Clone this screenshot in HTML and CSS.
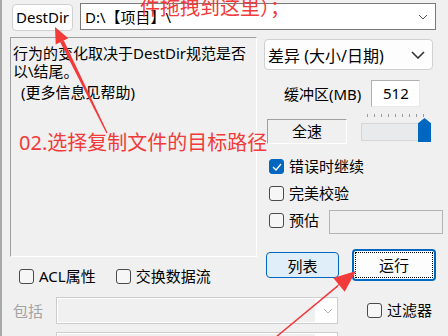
FILE: index.html
```html
<!DOCTYPE html>
<html lang="zh-CN">
<head>
    <meta charset="UTF-8">
    <title>FastCopy</title>
    <link rel="stylesheet" href="styles.css">
</head>
<body>

    <div class="top">
        <button class="dest-btn">DestDir</button>
        <div class="path-box">
            <span>D:\【项目】\</span>
            <svg width="10" height="6" viewBox="0 0 10 6"><path d="M1 1 L5 5 L9 1" fill="none" stroke="#555" stroke-width="1"/></svg>
        </div>
    </div>

    <div class="main">
        <div class="left">
            <div class="desc">
                <p>行为的变化取决于DestDir规范是否<br>以\结尾。</p>
                <p class="more">(更多信息见帮助)</p>
            </div>
            <div class="opts">
                <label class="check acl"><span class="box"></span>ACL属性</label>
                <label class="check"><span class="box"></span>交换数据流</label>
            </div>
        </div>

        <div class="right">
            <div class="mode">
                <span>差异 (大小/日期)</span>
                <svg width="14" height="8" viewBox="0 0 14 8"><path d="M1 1 L7 7 L13 1" fill="none" stroke="#333" stroke-width="1.6"/></svg>
            </div>
            <div class="buffer">
                <span>缓冲区(MB)</span>
                <div class="num">512</div>
            </div>
            <div class="speed">
                <div class="speed-btn">全速</div>
                <div class="slider">
                    <div class="ticks"></div>
                    <div class="track"></div>
                    <div class="thumb"></div>
                </div>
            </div>
            <div class="checks">
                <label class="check">
                    <span class="box on"><svg width="10" height="8" viewBox="0 0 10 8"><path d="M1 4 L4 7 L9 1" fill="none" stroke="#fff" stroke-width="1.3"/></svg></span>错误时继续
                </label>
                <label class="check"><span class="box"></span>完美校验</label>
                <label class="check estimate"><span class="box"></span>预估<div class="est-box"></div></label>
            </div>
            <div class="actions">
                <button class="list-btn">列表</button>
                <button class="run-btn"><span>运行</span></button>
            </div>
        </div>
    </div>

    <div class="filter">
        <span class="inc-label">包括</span>
        <div class="combo">
            <div class="combo-fill"></div>
            <svg width="10" height="6" viewBox="0 0 10 6"><path d="M1 1 L5 5 L9 1" fill="none" stroke="#b5b5b5" stroke-width="1"/></svg>
        </div>
        <label class="check filter-check"><span class="box"></span>过滤器</label>
    </div>
    <div class="filter second">
        <div class="combo"><div class="combo-fill"></div></div>
    </div>

    <!-- red annotations drawn over the window -->
    <svg class="marks" width="448" height="336" viewBox="0 0 448 336">
        <polygon points="55,27 68.3,38.3 55.7,44.5" fill="#f23a3a"/>
        <polygon points="63.8,40.5 60.2,42.3 106.4,133.3 107.6,132.7" fill="#f23a3a"/>
        <polygon points="356,271 344.7,291.8 333.3,278" fill="#f23a3a"/>
        <polygon points="340.6,282.6 337.4,287.2 247,362 252,356" fill="#f23a3a"/>
    </svg>
    <div class="note note-top">件拖拽到这里）；</div>
    <div class="note note-mid">02.选择复制文件的目标路径</div>

</body>
</html>
```

FILE: styles.css
```css
body {
    margin: 0;
    width: 448px;
    height: 336px;
    overflow: hidden;
    position: relative;
    background: linear-gradient(to right, #a9a9a9 0 2px, #f0f0f0 2px);
    font-family: "Noto Sans", "Noto Sans CJK SC", sans-serif;
    font-size: 15px;
    color: #000;
}

button {
    font: inherit;
    color: inherit;
    padding: 0;
    cursor: pointer;
}

.top {
    display: flex;
    align-items: flex-start;
    gap: 7px;
    height: 28px;
    padding: 3px 0 0 12px;
}

.dest-btn {
    margin-top: 1px;
    width: 61px;
    height: 27px;
    border: 1px solid #d0d0d0;
    border-radius: 4px;
    background: #fdfdfd;
    line-height: 25px;
}

.path-box {
    width: 356px;
    height: 27px;
    box-sizing: border-box;
    border: 1px solid #7a7a7a;
    background: #fff;
    display: flex;
    align-items: center;
    justify-content: space-between;
    padding: 0 7px 0 4px;
}

.main {
    display: flex;
    margin-top: 6px;
}

.left {
    margin-left: 10px;
    width: 247px;
}

.desc {
    box-sizing: border-box;
    height: 220px;
    border: 1px solid;
    border-color: #a0a0a0 #fff #fff #a0a0a0;
    padding: 7px 0 0 2px;
    line-height: 17.5px;
    white-space: nowrap;
}

.desc p {
    margin: 0;
}

.desc .more {
    margin-top: 4px;
    padding-left: 8px;
}

.opts {
    display: flex;
    padding: 12px 0 0 9px;
}

.acl {
    margin-right: 20px;
}

.check {
    display: flex;
    align-items: center;
    gap: 5px;
    height: 15px;
    line-height: 15px;
    white-space: nowrap;
}

.box {
    width: 15px;
    height: 15px;
    box-sizing: border-box;
    border: 1px solid #4a4a4a;
    border-radius: 3px;
    background: #f6f6f6;
    flex-shrink: 0;
}

.box.on {
    background: #0067c0;
    border-color: #0067c0;
    display: flex;
    align-items: center;
    justify-content: center;
}

.right {
    margin-left: 7px;
    width: 179px;
}

.mode {
    margin-top: 2px;
    width: 169px;
    height: 31px;
    box-sizing: border-box;
    border: 1px solid #d0d0d0;
    border-radius: 4px;
    background: #fdfdfd;
    display: flex;
    align-items: center;
    justify-content: space-between;
    padding: 0 7px 0 3px;
    font-size: 16px;
}

.buffer {
    display: flex;
    align-items: center;
    gap: 10px;
    margin-top: 10px;
    padding-left: 20px;
}

.num {
    width: 49px;
    height: 27px;
    box-sizing: border-box;
    border: 1px solid;
    border-color: #b0b0b0 #e8e8e8 #e8e8e8 #b0b0b0;
    background: #fff;
    text-align: center;
    line-height: 25px;
}

.speed {
    display: flex;
    margin-top: 7px;
}

.speed-btn {
    margin: 5px 0 0 3px;
    width: 80px;
    height: 25px;
    box-sizing: border-box;
    border: 1px solid;
    border-color: #a0a0a0 #fff #fff #a0a0a0;
    text-align: center;
    line-height: 23px;
}

.slider {
    position: relative;
    margin-left: 14px;
    width: 70px;
    height: 28px;
}

.ticks {
    margin-left: 6px;
    width: 60px;
    height: 3px;
    background: repeating-linear-gradient(to right, #9a9a9a 0 1px, transparent 1px 7px);
}

.track {
    margin-top: 6px;
    width: 60px;
    height: 18px;
    box-sizing: border-box;
    border: 1px solid #d6d6d6;
    background: #e8eaeb;
}

.thumb {
    position: absolute;
    left: 57px;
    top: 4px;
    width: 13px;
    height: 24px;
    background: #0067c0;
    clip-path: polygon(50% 0, 100% 22%, 100% 100%, 0 100%, 0 22%);
}

.checks {
    display: flex;
    flex-direction: column;
    gap: 12px;
    margin-top: 15px;
    padding-left: 5px;
}

.estimate {
    align-items: flex-start;
}

.est-box {
    margin: -3px 0 -6px 5px;
    width: 115px;
    height: 24px;
    box-sizing: border-box;
    border: 1px solid #b4b4b4;
    background: #f0f0f0;
}

.actions {
    display: flex;
    align-items: center;
    height: 32px;
    margin-top: 21px;
}

.list-btn {
    margin-left: 2px;
    width: 73px;
    height: 26px;
    border: 1px solid #0067c0;
    border-radius: 4px;
    background: #e0eef9;
}

.run-btn {
    margin-left: 13px;
    width: 84px;
    height: 32px;
    border: 2px solid #0067c0;
    border-radius: 4px;
    background: #fdfdfd;
    padding: 1px;
}

.run-btn span {
    display: block;
    height: 100%;
    box-sizing: border-box;
    border: 1px dotted #000;
    line-height: 24px;
}

.filter {
    display: flex;
    align-items: center;
    margin-top: 13px;
    padding-left: 13px;
}

.inc-label {
    width: 43px;
    color: #a3a3a3;
}

.combo {
    width: 282px;
    height: 27px;
    box-sizing: border-box;
    border: 1px solid #cdcdcd;
    background: #fff;
    padding: 1px;
    display: flex;
    align-items: center;
    gap: 8px;
}

.combo-fill {
    width: 257px;
    height: 100%;
    background: #f0f0f0;
}

.filter-check {
    margin-left: 29px;
}

.second {
    margin-top: 8px;
    padding-left: 56px;
}

.marks {
    position: absolute;
    left: 0;
    top: 0;
    pointer-events: none;
}

.note {
    position: absolute;
    color: #f23a3a;
    font-size: 20px;
    line-height: 20px;
    white-space: nowrap;
    font-family: "Noto Sans", "Noto Sans CJK SC", sans-serif;
}

.note-top {
    left: 140px;
    top: -2px;
}

.note-mid {
    left: 19px;
    top: 133px;
}
```
